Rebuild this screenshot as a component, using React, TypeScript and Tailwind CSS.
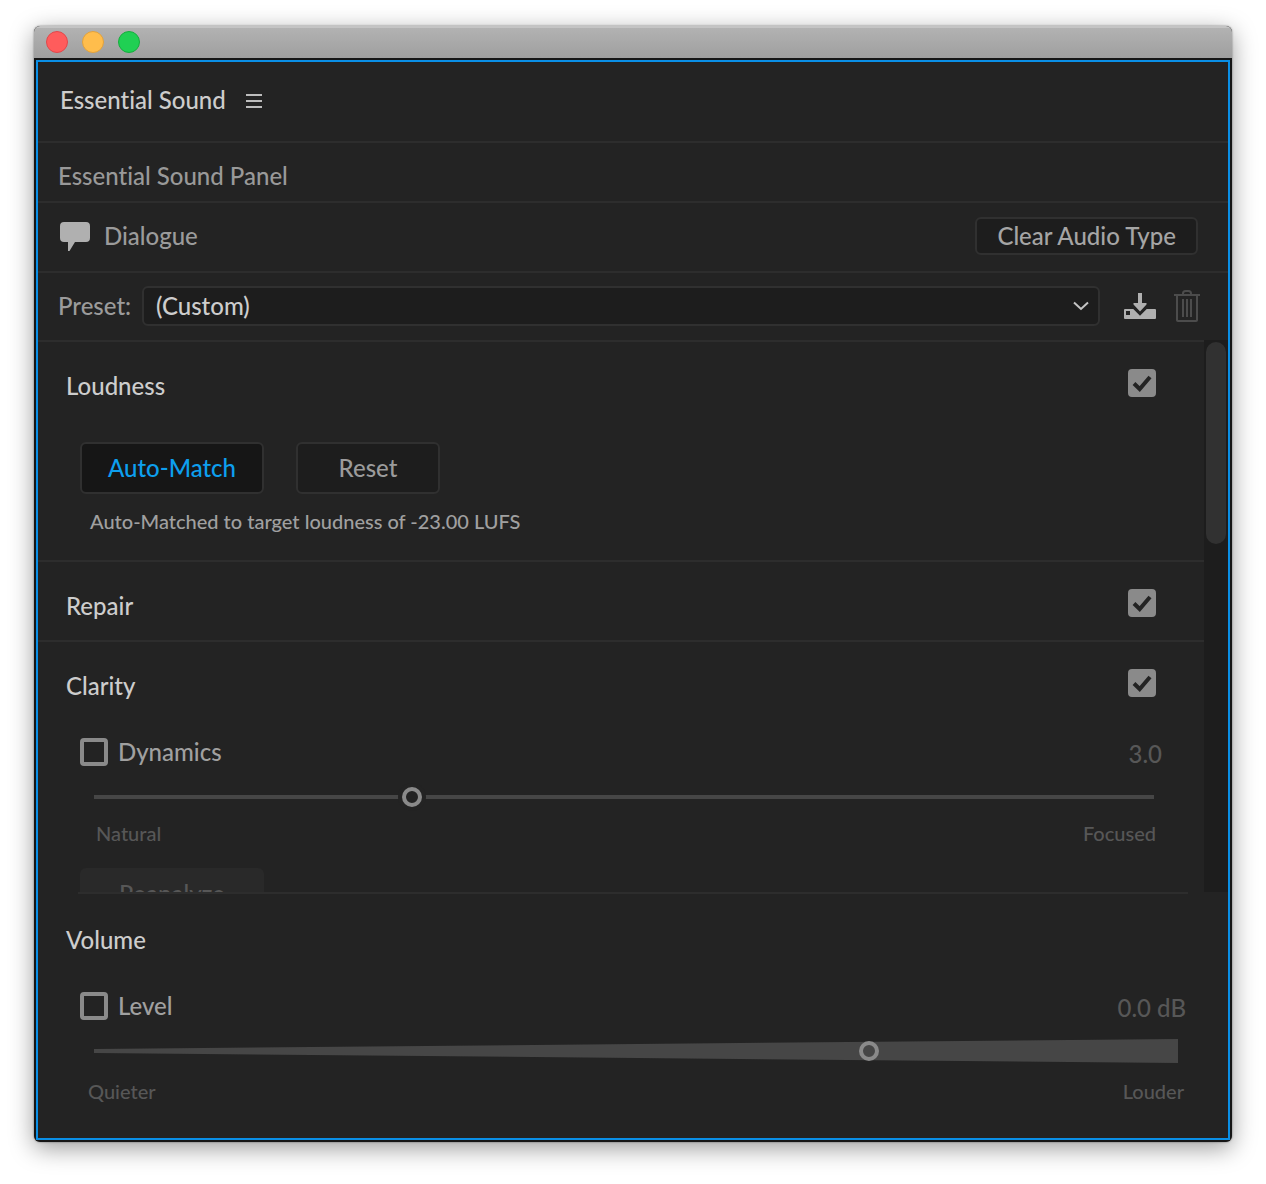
import { useState } from "react";

const sliderClasses =
  "col-start-1 row-start-1 h-5 w-full cursor-pointer appearance-none bg-transparent outline-none [&::-webkit-slider-thumb]:size-5 [&::-webkit-slider-thumb]:appearance-none [&::-webkit-slider-thumb]:rounded-full [&::-webkit-slider-thumb]:border-4 [&::-webkit-slider-thumb]:border-[#8a8a8a]";

function SectionHeader({ title }: { title: string }) {
  return (
    <label className="flex items-start justify-between pt-[27px] pr-12 pl-7">
      <span className="pt-px leading-8 text-[#cdcdcd]">{title}</span>
      <span className="grid">
        <input
          type="checkbox"
          defaultChecked
          className="peer col-start-1 row-start-1 size-7 appearance-none rounded border-4 border-[#8a8a8a] checked:bg-[#8a8a8a]"
        />
        <svg
          viewBox="0 0 28 28"
          className="pointer-events-none invisible col-start-1 row-start-1 size-7 peer-checked:visible"
          fill="none"
          stroke="#232323"
          strokeWidth="4"
          aria-hidden="true"
        >
          <path d="M6 14.5 L11.7 20 L22 8" />
        </svg>
      </span>
    </label>
  );
}

function ToggleRow({ label, value }: { label: string; value: string }) {
  return (
    <div className="flex items-center justify-between">
      <label className="flex items-center gap-2.5 text-[#a0a0a0]">
        <input
          type="checkbox"
          className="size-7 appearance-none rounded border-4 border-[#8a8a8a] checked:bg-[#8a8a8a]"
        />
        <span className="leading-7">{label}</span>
      </label>
      <output className="pt-1 leading-7 text-[#575757]">{value}</output>
    </div>
  );
}

export default function App() {
  const [dynamics, setDynamics] = useState(3);
  const [level, setLevel] = useState(71.5);

  return (
    <main className="bg-white px-[34px] pt-[26px] pb-[42px] font-['Lato',sans-serif] text-[24px] font-medium [font-variant-ligatures:none]">
      <div className="overflow-hidden rounded-md bg-[#161616] shadow-[0_6px_24px_rgba(0,0,0,0.4),0_0_2px_rgba(0,0,0,0.5)]">
        <div className="flex h-8 items-center gap-3.5 border-t-2 border-[#c4c4c4] bg-linear-to-b from-[#b2b2b2] to-[#9f9f9f] px-3 pb-0.5">
          <button aria-label="Close" className="size-[22px] rounded-full border border-[#e2474a] bg-[#ff5c5c]" />
          <button aria-label="Minimize" className="size-[22px] rounded-full border border-[#e2a23c] bg-[#ffbd4c]" />
          <button aria-label="Zoom" className="size-[22px] rounded-full border border-[#15ae3d] bg-[#20d053]" />
        </div>

        <div className="m-0.5 border-2 border-[#0a8fe6] bg-[#232323]">
          <header className="flex items-center gap-5 border-b-2 border-[#2d2d2d] px-[22px] pt-[22px] pb-[25px]">
            <h1 className="leading-8 text-[#cdcdcd]">Essential Sound</h1>
            <button aria-label="Panel menu" className="mt-0.5">
              <svg viewBox="0 0 16 14" className="h-3.5 w-4" fill="#bdbdbd" aria-hidden="true">
                <path d="M0 0h16v2H0zM0 6h16v2H0zM0 12h16v2H0z" />
              </svg>
            </button>
          </header>

          <p className="border-b-2 border-[#2d2d2d] px-5 pt-[17px] pb-[9px] leading-8 text-[#999999]">
            Essential Sound Panel
          </p>

          <div className="flex items-center justify-between border-b-2 border-[#2d2d2d] pt-3.5 pb-4 pr-[30px] pl-[22px] text-[#9b9b9b]">
            <div className="flex items-center gap-3.5">
              <svg viewBox="0 0 30 30" className="mt-0.5 size-[30px]" fill="#b0b0b0" aria-hidden="true">
                <path d="M4 0h22a4 4 0 0 1 4 4v12a4 4 0 0 1-4 4H15L9.500 29H8V20H4a4 4 0 0 1-4-4V4a4 4 0 0 1 4-4z" />
              </svg>
              <h2 className="leading-8">Dialogue</h2>
            </div>
            <button className="h-[38px] rounded-md border-2 border-[#303030] bg-[#1d1d1d] px-5 leading-8 text-[#a5a5a5]">
              Clear Audio Type
            </button>
          </div>

          <div className="flex items-center pt-[13px] pr-7 pb-3.5 pl-5">
            <label htmlFor="preset" className="w-[84px] leading-8 text-[#9b9b9b]">
              Preset:
            </label>
            <div className="grid flex-1 items-center">
              <select
                id="preset"
                className="col-start-1 row-start-1 h-10 w-full appearance-none rounded-md border-2 border-[#303030] bg-[#1d1d1d] px-3 text-[#cdcdcd]"
              >
                <option>(Custom)</option>
              </select>
              <svg
                viewBox="0 0 16 10"
                className="pointer-events-none col-start-1 row-start-1 mr-[11px] h-2.5 w-4 justify-self-end"
                fill="none"
                stroke="#c4c4c4"
                strokeWidth="2"
                aria-hidden="true"
              >
                <path d="M1 1.500L8 8L15 1.500" />
              </svg>
            </div>
            <button aria-label="Save preset" className="ml-6">
              <svg viewBox="0 0 32 26" className="h-[26px] w-8" fill="#b0b0b0" aria-hidden="true">
                <path d="M14 0h4v10h4.500V11.500L16 18.500L9.500 11.500V10H14z" />
                <path
                  fillRule="evenodd"
                  d="M1 16h8.300L16 22.700L22.700 16H31a1 1 0 0 1 1 1v8a1 1 0 0 1-1 1H1a1 1 0 0 1-1-1v-8a1 1 0 0 1 1-1zM2 18v4h4v-4z"
                />
              </svg>
            </button>
            <button aria-label="Delete preset" className="ml-[18px]">
              <svg
                viewBox="0 0 26 32"
                className="h-8 w-[26px]"
                fill="none"
                stroke="#4c4c4c"
                strokeWidth="2"
                aria-hidden="true"
              >
                <path d="M0 5H26M9 5V3.500Q9 1 11.500 1h3Q17 1 17 3.500V5M3 5V30.200Q3 31 4 31H22Q23 31 23 30.200V5" />
                <path d="M9 9V27M13 9V27M17 9V27" />
              </svg>
            </button>
          </div>

          <div className="flex h-[552px]">
            <div className="min-w-0 flex-1 overflow-hidden">
              <section className="border-t-2 border-[#2d2d2d] pb-[27px]">
                <SectionHeader title="Loudness" />
                <div className="flex gap-8 pt-10 pl-[42px]">
                  <button className="h-[52px] w-[184px] rounded-md border-2 border-[#303030] bg-[#161616] text-[#0d9fee]">
                    Auto-Match
                  </button>
                  <button className="h-[52px] w-36 rounded-md border-2 border-[#303030] bg-[#1d1d1d] text-[#9b9b9b]">
                    Reset
                  </button>
                </div>
                <p className="pt-[15px] pl-[52px] text-[20px] leading-6 text-[#a0a0a0]">
                  Auto-Matched to target loudness of -23.00 LUFS
                </p>
              </section>

              <section className="border-t-2 border-[#2d2d2d] pb-[18px]">
                <SectionHeader title="Repair" />
              </section>

              <section className="border-t-2 border-[#2d2d2d]">
                <SectionHeader title="Clarity" />
                <div className="px-[42px] pt-[34px]">
                  <ToggleRow label="Dynamics" value={dynamics.toFixed(1)} />
                  <div className="-mr-0.5 ml-1 grid items-center pt-[19px]">
                    <div className="col-start-1 row-start-1 mx-2.5 h-1 bg-[#464646]" />
                    <input
                      type="range"
                      aria-label="Dynamics"
                      min="0"
                      max="10"
                      step="0.1"
                      value={dynamics}
                      onChange={(event) => setDynamics(Number(event.target.value))}
                      className={`${sliderClasses} [&::-webkit-slider-thumb]:bg-[#232323] [&::-webkit-slider-thumb]:shadow-[0_0_0_4px_#232323]`}
                    />
                  </div>
                  <div className="flex justify-between pt-3.5 pr-1.5 pl-4 text-[20px] leading-6 text-[#575757]">
                    <span>Natural</span>
                    <span>Focused</span>
                  </div>
                  <button disabled className="mt-[23px] h-[52px] w-[184px] rounded-md bg-[#292929] text-[#575757]">
                    Reanalyze
                  </button>
                </div>
              </section>
            </div>
            <div className="w-6 bg-[#1d1d1d] p-0.5">
              <div className="h-[202px] rounded-full bg-[#313131]" />
            </div>
          </div>

          <section className="pb-[35px]">
            <div className="mx-10 border-t-2 border-[#2d2d2d]" />
            <h2 className="pt-[30px] pl-7 leading-8 text-[#cdcdcd]">Volume</h2>
            <div className="px-[42px] pt-[34px]">
              <ToggleRow label="Level" value="0.0 dB" />
              <div className="-mr-0.5 ml-1 grid items-center pt-[17px]">
                <svg
                  viewBox="0 0 100 24"
                  preserveAspectRatio="none"
                  className="col-start-1 row-start-1 h-6 w-full px-2.5"
                  fill="#464646"
                  aria-hidden="true"
                >
                  <path d="M0 10L100 0V24L0 14z" />
                </svg>
                <input
                  type="range"
                  aria-label="Level"
                  min="0"
                  max="100"
                  step="0.5"
                  value={level}
                  onChange={(event) => setLevel(Number(event.target.value))}
                  className={`${sliderClasses} [&::-webkit-slider-thumb]:bg-[#464646]`}
                />
              </div>
              <div className="flex justify-between pt-4 pr-0.5 pl-2 text-[20px] leading-6 text-[#575757]">
                <span>Quieter</span>
                <span>Louder</span>
              </div>
            </div>
          </section>
        </div>
      </div>
    </main>
  );
}
